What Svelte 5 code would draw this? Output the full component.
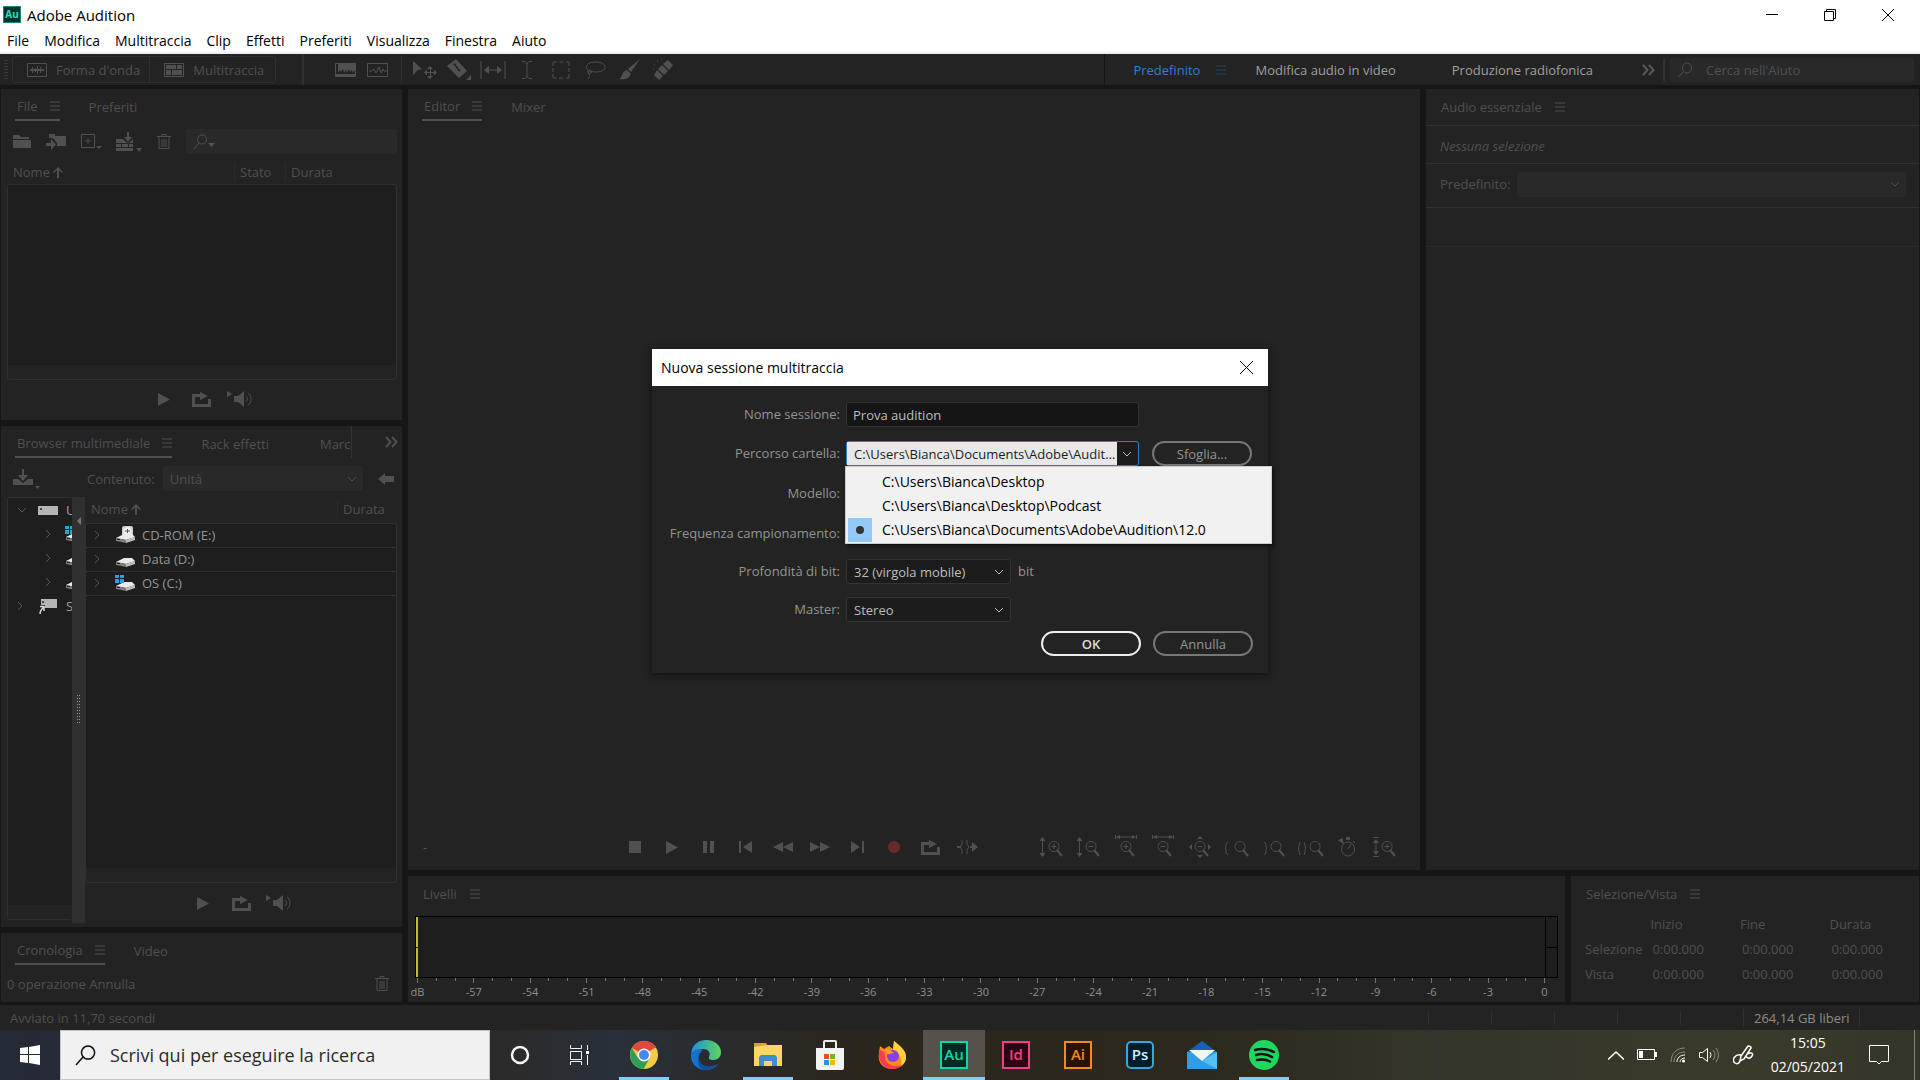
<script>
    const menus = ['File', 'Modifica', 'Multitraccia', 'Clip', 'Effetti', 'Preferiti', 'Visualizza', 'Finestra', 'Aiuto'];

    const tools = ['move', 'razor', 'slip', 'ibeam', 'marquee', 'lasso', 'brush', 'heal'];
    const transport = ['stop', 'play', 'pause', 'toStart', 'rewind', 'forward', 'toEnd', 'record', 'loop', 'skip'];
    const zooms = ['zoomInV', 'zoomOutV', 'zoomInH', 'zoomOutH', 'zoomFull', 'zoomIn', 'zoomOut', 'zoomSel', 'timer', 'zoomTrack'];
    const preview = ['play', 'loop', 'autoplay'];

    const drives = [
        { name: 'CD-ROM (E:)', kind: 'cd' },
        { name: 'Data (D:)', kind: 'disk' },
        { name: 'OS (C:)', kind: 'os' },
    ];

    const folders = [
        'C:\\Users\\Bianca\\Desktop',
        'C:\\Users\\Bianca\\Desktop\\Podcast',
        'C:\\Users\\Bianca\\Documents\\Adobe\\Audition\\12.0',
    ];

    let sessionName = $state('Prova audition');
    let folder = $state(folders[2]);
    let pickerOpen = $state(true);

    // one tick per dB, a label every third
    const ticks = Array.from({ length: 61 }, (_, i) => i - 60);

    const ranges = ['Selezione', 'Vista'];

    const apps = [
        { id: 'chrome', running: true },
        { id: 'edge' },
        { id: 'explorer', running: true },
        { id: 'store' },
        { id: 'firefox' },
        { id: 'Au', tile: true, running: true, active: true },
        { id: 'Id', tile: true },
        { id: 'Ai', tile: true },
        { id: 'Ps', tile: true },
        { id: 'mail' },
        { id: 'spotify', running: true },
    ];

    const lens = 'M10 4.5a5 5 0 1 0 .1 0z';
    const lensIn = lens + 'M7.5 9.5h5M10 7v5';
    const lensOut = lens + 'M7.5 9.5h5';

    // width, height, fill path, line path, then magnifier path and its x shift
    const icons = {
        menu: [10, 10, '', 'M0 1h10M0 5h10M0 9h10'],
        chevron: [10, 6, '', 'M1 1l4 4 4-4'],
        chevronRight: [6, 10, '', 'M1 1l4 4-4 4'],
        more: [14, 12, '', 'M2 1l4.5 5L2 11M8 1l4.500 5L8 11'],
        up: [10, 11, 'M5 0l5 5-1 1-3-3v8H4V3L1 6 0 5z', ''],
        back: [16, 12, 'M0 6l7-6v3h9v6H7v3z', ''],
        search: [16, 16, '', 'M6 10l-5 5M10 1a4.500 5 0 1 0 .1 0z'],
        searchDrop: [22, 16, 'M15 9h7l-3.500 4z', 'M6 9l-5 6M9 1a4.500 4.500 0 1 0 .1 0z'],
        wave: [20, 14, 'M3 6h14v2H3zM5 4h1v6H5zM8 5h1v4H8zM10 3h1v8h-1zM13 4h1v6h-1z', 'M.5.5h19v13H.5z'],
        multi: [20, 14, 'M2 2h10v4H2zM13 2h5v4h-5zM2 7h5v5H2zM8 7h10v5H8z', 'M.5.5h19v13H.5z'],
        spectral: [21, 14, 'M1 1h19v6l-2 3-1-3-2 2-1-3-2 4-1-3-2 3-1-4-2 3-1-2-2 3V1zM1 13v-2h19v2z', 'M.5.5h20v13H.5z'],
        pitch: [21, 14, '', 'M.5.5h20v13H.5zM2 8h3l2-2 2 4 3-6 2 6 2-4 1 2h3'],
        move: [24, 18, 'M0 0l9 8-4 1-5 5zM17 5l3 3h-6zM17 18l3-3h-6zM11 11.500l3-3v6zM24 11.500l-3-3v6z', 'M17.500 7v9M13 11.500h9'],
        razor: [24, 21, 'M0 7l9-7 11 12-8 7zM24 16v5h-5z', ''],
        slip: [26, 18, 'M4 9l5-4v8zM22 9l-5-4v8z', 'M1 0v18M25 0v18M6 9h14'],
        ibeam: [10, 18, '', 'M0 .5h3l2 2 2-2h3M5 2v14M0 17.500h3l2-2 2 2h3'],
        marquee: [18, 18, '', 'M1 5V1h4M7.500 1h4M14 1h3v4M17 7v4M17 13v4h-3M11 17H7M5 17H1v-4M1 11V7'],
        lasso: [21, 18, '', 'M11 1c12 0 12 10 0 10-13 0-13-10 0-10M4 9c-3 2 0 5 2 3s-1-4-2-2 2 5-1 8'],
        brush: [21, 21, 'M21 0L9 10l3 3zM8 11l4 4c-2 5-7 6-12 5 4-1 2-8 8-9z', ''],
        heal: [22, 21, 'M16 1l5 5-4 5-6-6zM10 6l6 6-4 4-6-6zM5 11l6 6-4 4-5-5z', 'M2 6h1M5 2h1M1 10h1M9 0h1'],
        folder: [18, 13, 'M0 0h6l2 2h8v2H0zM0 5h18v8H0z', ''],
        importFile: [20, 15, 'M3 0h6v2h11v10h-9V9L7 4H3zM0 9h5V5l5 5.500L5 16v-4H0z', ''],
        newFile: [20, 15, 'M15 12h6l-3 3z', 'M.5.5h13v13H.5zM7 4v6M4 7h6'],
        insert: [26, 20, 'M11 0h2v5h3l-4 5-4-5h3zM0 7h7l5 5 5-5v4H0zM0 12h5v3H0zM6 12h6v3H6zM13 12h4v3h-4zM0 16h17v3H0zM20 16h6l-3 4z', ''],
        trash: [14, 15, '', 'M0 2.500h14M5 2V.5h4V2M2 3v11.500h10V3M5 5v8M7 5v8M9 5v8'],
        insertDrive: [28, 20, 'M9 0h2v6h4l-5 6-5-6h4zM0 10h5l5 4 5-4h5v6H0zM22 17h5l-2.500 3z', ''],
        play: [12, 13, 'M0 0l12 6.500L0 13z', ''],
        stop: [12, 12, 'M0 0h12v12H0z', ''],
        pause: [11, 12, 'M0 0h4v12H0zM7 0h4v12H7z', ''],
        toStart: [14, 12, 'M0 0h2v12H0zM13 0v12L4 6z', ''],
        rewind: [20, 10, 'M10 0v10L0 5zM20 0v10L10 5z', ''],
        forward: [20, 10, 'M0 0v10l10-5zM10 0v10l10-5z', ''],
        toEnd: [14, 12, 'M12 0h2v12h-2zM1 0v12l9-6z', ''],
        record: [12, 12, 'M6 0a6 6 0 1 0 .1 0z', ''],
        loop: [19, 15, 'M0 2h8V0l8 4-8 4V5H3v7h13V7h3v8H0z', ''],
        skip: [21, 14, 'M15 2l6 5-6 5V8h-2V6h2zM0 6h4v2H0z', 'M5 0v4L3 7l2 3v4M10 0v4l2 3-2 3v4'],
        autoplay: [26, 16, 'M0 0l5 3-5 3zM7 5h4l6-5v16l-6-5H7z', 'M19 5c2 2 2 4 0 6M21 2c4 3 4 9 0 12'],
        zoomInV: [22, 20, 'M1.500 0l3 4h-6zM1.500 20l3-4h-6z', 'M1.500 2v16', lensIn, 3],
        zoomOutV: [22, 20, 'M1.500 0l3 4h-6zM1.500 20l3-4h-6z', 'M1.500 2v16', lensOut, 3],
        zoomInH: [22, 20, 'M1 0l4-2v4zM21 0l-4-2v4z', 'M2 0h18M.5-2v4M21.500-2v4', lensIn, 1],
        zoomOutH: [22, 20, 'M1 0l4-2v4zM21 0l-4-2v4z', 'M2 0h18M.5-2v4M21.500-2v4', lensOut, 1],
        zoomFull: [22, 20, 'M11-1l3 3H8zM11 21l3-3H8zM0 10l3-3v6zM22 10l-3-3v6z', '', lensOut, 1],
        zoomIn: [26, 20, '', 'M4 5L2 7v3l-1 1 1 1v4l2 2', lens, 6],
        zoomOut: [24, 20, '', 'M2 5l2 2v3l1 1-1 1v4l-2 2', lens, 4],
        zoomSel: [28, 20, '', 'M3 5L2 8v2l-1 1 1 1v3l1 3M7 5l1 3v2l1 1-1 1v3l-1 3', lens, 8],
        timer: [20, 20, 'M0 3l5-2v6zM8 0h4v3H8z', 'M10 5a6.500 7 0 1 0 .1 0zM10 12l3-5M15 4l2 2M3 4l3 2'],
        zoomTrack: [22, 20, 'M2 2l3 4h-6zM2 18l3-4h-6z', 'M-1 .5h6M2 4v12M-1 19.500h6', lensIn, 3],
    };
</script>

{#snippet icon(name)}
    {@const [w, h, fill, line, glass, dx] = icons[name]}
    <svg class="icon {name}" width={w} height={h} viewBox="0 0 {w} {h}" aria-hidden="true">
        {#if fill}<path d={fill} fill="currentColor" />{/if}
        {#if line}<path d={line} fill="none" stroke="currentColor" />{/if}
        {#if glass}
            <g fill="none" stroke="currentColor" transform="translate({dx} 0)">
                <path d={glass} />
                <path d="M13 13l5 6" stroke-width="2" />
            </g>
        {/if}
        {#if name === 'razor'}<path d="M7 5l2 2M11 10l2 2M9 8l2 1" stroke="#232323" stroke-width="2" />{/if}
    </svg>
{/snippet}

{#snippet tab(label, active)}
    <button class="tab" class:active>{label}{#if active}{@render icon('menu')}{/if}</button>
{/snippet}

{#snippet drive(kind)}
    <svg class="drive" width="20" height="18" viewBox="0 0 20 18" aria-hidden="true">
        {#if kind === 'cd'}
            <rect x="7" y="0" width="11" height="11" rx="2" fill="#cfcfcf" />
            <circle cx="12.500" cy="5" r="4" fill="#efefef" />
            <path d="M10 5h5M12.500 3v4" stroke="#555" />
        {/if}
        <path d="M1 12l8-4h8l3 3-9 3z" fill="#eaeaea" />
        <path d="M1 12l10 2v3L1 15z" fill="#7d7d7d" />
        <path d="M11 14l9-3v3l-9 3z" fill="#bdbdbd" />
        <path d="M2 13.500h3" stroke="#222" />
        {#if kind === 'os'}
            <path d="M0 1h4v3H0zM5 1h4v3H5zM0 5h4v4H0zM5 5h4v4H5z" fill="#22a5d0" />
        {/if}
    </svg>
{/snippet}

{#snippet logo(id)}
    <svg width="30" height="30" viewBox="0 0 30 30" aria-hidden="true">
        {#if id === 'chrome'}
            <circle cx="15" cy="15" r="14" fill="#f7c948" />
            <path d="M15 15L3 8a14 14 0 0 1 24-1z" fill="#dc4b3e" />
            <path d="M15 8h12.500L26 6 15 1z" fill="#dc4b3e" />
            <path d="M2.900 8a14 14 0 0 0 11.600 21l6-10.500L9 18z" fill="#2f9e57" />
            <circle cx="15" cy="15" r="6.500" fill="#fff" />
            <circle cx="15" cy="15" r="5" fill="#4a86f0" />
        {:else if id === 'edge'}
            <defs>
                <linearGradient id="edgeTop" x1="0" x2="1">
                    <stop offset="0" stop-color="#1d8fe0" />
                    <stop offset="1" stop-color="#5fd65a" />
                </linearGradient>
            </defs>
            <path d="M0 14C1 5 7 0 15 0c9 0 15 6 15 12 0 5-3 8-8 8-3 0-5-1-4-3 2-5-1-8-6-8C6 9 1 12 0 14z" fill="url(#edgeTop)" />
            <path d="M0 14c2-4 7-6 12-4-4 2-6 7-3 12 3 6 11 6 18 2-3 4-7 6-12 6C6 30-1 23 0 14z" fill="#1673cc" />
            <path d="M12 10c-4 2-6 8-2 13s11 5 17 1c-2 2-6 6-12 6-7 0-12-9-3-20z" fill="#0f4f9e" />
        {:else if id === 'explorer'}
            <path d="M1 3h12l2 3v4H1z" fill="#d9a520" />
            <path d="M1 7l14-2h14v21H1z" fill="#fcd56a" />
            <path d="M6 26V17l2-2h14l2 2v9h-5v-5h-8v5z" fill="#3f8fd0" />
        {:else if id === 'store'}
            <path d="M9 9V2q0-1 1-1h10q1 0 1 1v7" fill="none" stroke="#ededed" stroke-width="2" />
            <path d="M1 8h28v20q0 2-2 2H3q-2 0-2-2z" fill="#f3f3f3" />
            <path d="M9 14h5v5H9z" fill="#e8502a" />
            <path d="M15 14h5v5h-5z" fill="#7ab51d" />
            <path d="M9 20h5v5H9z" fill="#1a9be0" />
            <path d="M15 20h5v5h-5z" fill="#f8b610" />
        {:else if id === 'firefox'}
            <path d="M2 12l1-6 4 3 5-3 4 3 1-8c5 4 12 9 12 16 0 7-6 12-14 12S0 24 2 12z" fill="#ff8a1f" />
            <path d="M17 1c6 5 12 9 12 16 0 4-2 7-5 9 1-6 0-12-8-16z" fill="#ffd23b" />
            <path d="M2 12c-1 11 6 17 13 17 5 0 8-2 10-4-9 3-17-1-17-8 0-4 0-5-5-7z" fill="#fb3b52" />
            <circle cx="16" cy="16" r="6" fill="#8a3fe0" />
            <path d="M8 10c3-1 6 0 9 3-3 0-5 2-7 1z" fill="#ff9a2b" />
        {:else if id === 'mail'}
            <path d="M0 12L15 1l15 11v4H0z" fill="#1660b8" />
            <path d="M0 12h30v17H0z" fill="#2e9fe6" />
            <path d="M15 21L30 12v17z" fill="#54c0f5" />
            <path d="M2 10h26L15 21z" fill="#f4f4f4" />
        {:else if id === 'spotify'}
            <circle cx="15" cy="15" r="15" fill="#1ed760" />
            <path d="M6 10c7-2 13-1 19 2M7 15c6-2 11-1 16 2M8 20c5-1 9-1 13 1.500" fill="none" stroke="#111" stroke-width="2.500" stroke-linecap="round" />
        {/if}
    </svg>
{/snippet}

{#snippet field(id, wide)}
    <span class="select" class:wide>
        <select {id}>
            {#if id === 'depth'}<option>32 (virgola mobile)</option>{/if}
            {#if id === 'master'}<option>Stereo</option>{/if}
        </select>
        {@render icon('chevron')}
    </span>
{/snippet}

<div class="screen">
    <header class="titlebar">
        <span class="badge">Au</span>
        <span class="title">Adobe Audition</span>
        <div class="winButtons">
            <button aria-label="Riduci a icona"><svg width="12" height="12"><path d="M0 5.500h12" stroke="#000" /></svg></button>
            <button aria-label="Ripristina"><svg width="12" height="12"><path d="M.5 2.500h9v9h-9zM2.500 2V.5h9v9H10" fill="none" stroke="#000" /></svg></button>
            <button aria-label="Chiudi"><svg width="12" height="12"><path d="M0 0l12 12M12 0L0 12" stroke="#000" /></svg></button>
        </div>
    </header>
    <nav class="menubar">
        {#each menus as item}<button>{item}</button>{/each}
    </nav>

    <div class="toolbar">
        <span class="grip"></span>
        <div class="views">
            <button>{@render icon('wave')}Forma d'onda</button>
            <button>{@render icon('multi')}Multitraccia</button>
        </div>
        <span class="rule thick"></span>
        <div class="displays">
            <button aria-label="Spettro">{@render icon('spectral')}</button>
            <button aria-label="Tonalità">{@render icon('pitch')}</button>
        </div>
        <span class="rule"></span>
        <div class="tools">
            {#each tools as t}<button aria-label={t}>{@render icon(t)}</button>{/each}
        </div>
        <div class="workspaces">
            <button class="current">Predefinito {@render icon('menu')}</button>
            <button>Modifica audio in video</button>
            <button>Produzione radiofonica</button>
            <button class="overflow" aria-label="Altro">{@render icon('more')}</button>
        </div>
        <label class="help">
            {@render icon('search')}
            <input type="search" placeholder="Cerca nell'Aiuto" aria-label="Cerca nell'Aiuto" />
        </label>
    </div>

    <main>
        <aside class="left">
            <section class="panel files">
                <div class="tabs">{@render tab('File', true)}{@render tab('Preferiti')}</div>
                <div class="fileTools">
                    <button aria-label="Apri">{@render icon('folder')}</button>
                    <button aria-label="Importa">{@render icon('importFile')}</button>
                    <button aria-label="Nuovo">{@render icon('newFile')}</button>
                    <button aria-label="Inserisci">{@render icon('insert')}</button>
                    <button aria-label="Elimina">{@render icon('trash')}</button>
                    <label class="filter">{@render icon('searchDrop')}<input aria-label="Filtro" /></label>
                </div>
                <div class="columns">
                    <span class="name">Nome {@render icon('up')}</span>
                    <span class="state">Stato</span>
                    <span class="length">Durata</span>
                </div>
                <div class="list"></div>
                <div class="preview">
                    {#each preview as p}<button aria-label={p}>{@render icon(p)}</button>{/each}
                </div>
            </section>

            <section class="panel browser">
                <div class="tabs">
                    {@render tab('Browser multimediale', true)}
                    {@render tab('Rack effetti')}
                    <span class="cut">{@render tab('Marca')}</span>
                    <button class="overflow" aria-label="Altro">{@render icon('more')}</button>
                </div>
                <div class="source">
                    <button aria-label="Importa">{@render icon('insertDrive')}</button>
                    <label for="content">Contenuto:</label>
                    <span class="select dim">
                        <select id="content"><option>Unità</option></select>
                        {@render icon('chevron')}
                    </span>
                    <button aria-label="Indietro">{@render icon('back')}</button>
                </div>
                <div class="split">
                    <div class="tree">
                        <div class="node">
                            {@render icon('chevron')}
                            <svg class="box" width="20" height="9"><path d="M0 0h20v9H0z" fill="#b5b5b5" /><circle cx="3" cy="3" r="1" fill="#222" /></svg>
                            U
                        </div>
                        {#each ['os', 'disk', 'disk'] as kind}
                            <div class="node child">{@render icon('chevronRight')}{@render drive(kind)}</div>
                        {/each}
                        <div class="node closed">
                            {@render icon('chevronRight')}
                            <svg class="box" width="20" height="15"><path d="M3 0h16v9H7V6H3z" fill="#b5b5b5" /><circle cx="5" cy="3" r="1" fill="#222" /><path d="M2 15q0-4 4-7M2 7.500h4V12" fill="none" stroke="#ddd" stroke-width="1.500" /></svg>
                            S
                        </div>
                    </div>
                    <div class="splitter"><span class="fold"></span><span class="dots"></span></div>
                    <div class="contents">
                        <div class="columns">
                            <span class="name">Nome {@render icon('up')}</span>
                            <span class="length">Durata</span>
                        </div>
                        <div class="list">
                            {#each drives as d}
                                <div class="row">{@render icon('chevronRight')}{@render drive(d.kind)}{d.name}</div>
                            {/each}
                        </div>
                        <div class="preview">
                            {#each preview as p}<button aria-label={p}>{@render icon(p)}</button>{/each}
                        </div>
                    </div>
                </div>
            </section>

            <section class="panel history">
                <div class="tabs">{@render tab('Cronologia', true)}{@render tab('Video')}</div>
                <div class="undo">
                    <span>0 operazione Annulla</span>
                    <button aria-label="Svuota">{@render icon('trash')}</button>
                </div>
            </section>
        </aside>

        <div class="right">
            <div class="upper">
                <section class="panel editor">
                    <div class="tabs">{@render tab('Editor', true)}{@render tab('Mixer')}</div>
                    <div class="controls">
                        <span>-</span>
                        <div class="group">{#each transport as t}<button aria-label={t}>{@render icon(t)}</button>{/each}</div>
                        <div class="group">{#each zooms as z}<button aria-label={z}>{@render icon(z)}</button>{/each}</div>
                    </div>
                </section>
                <section class="panel essential">
                    <h2>Audio essenziale {@render icon('menu')}</h2>
                    <p>Nessuna selezione</p>
                    <div class="preset">
                        <label for="preset">Predefinito:</label>
                        <span class="select dim"><select id="preset"></select>{@render icon('chevron')}</span>
                    </div>
                    <div class="blank"></div>
                </section>
            </div>
            <div class="lower">
                <section class="panel levels">
                    <h2>Livelli {@render icon('menu')}</h2>
                    <div class="meter">
                        <div class="bars"><span></span><span></span></div>
                        <div class="clip"><span></span><span></span></div>
                    </div>
                    <div class="scale">
                        {#each ticks as db}
                            <div class="tick" class:major={db % 3 === 0}>
                                {#if db % 3 === 0}<span>{db === -60 ? 'dB' : db}</span>{/if}
                            </div>
                        {/each}
                    </div>
                </section>
                <section class="panel selection">
                    <h2>Selezione/Vista {@render icon('menu')}</h2>
                    <table>
                        <thead>
                            <tr><th></th><th>Inizio</th><th>Fine</th><th>Durata</th></tr>
                        </thead>
                        <tbody>
                            {#each ranges as r}
                                <tr><th>{r}</th><td>0:00.000</td><td>0:00.000</td><td>0:00.000</td></tr>
                            {/each}
                        </tbody>
                    </table>
                </section>
            </div>
        </div>
    </main>

    <footer class="status">
        <span class="msg">Avviato in 11,70 secondi</span>
        <i></i><i></i><i></i><i></i><i></i>
        <span class="free">264,14 GB liberi</span>
    </footer>

    <div class="taskbar">
        <button class="start" aria-label="Start">
            <svg width="20" height="20"><path d="M0 3l8-1v7H0zM9 2l11-2v9H9zM0 10h8v8l-8-1zM9 10h11v10L9 18z" fill="#fff" /></svg>
        </button>
        <label class="find">
            <svg width="21" height="21"><path d="M8 12L1 20M13 1a6.500 6.500 0 1 0 .1 0z" fill="none" stroke="#111" stroke-width="1.500" /></svg>
            <input type="search" placeholder="Scrivi qui per eseguire la ricerca" aria-label="Scrivi qui per eseguire la ricerca" />
        </label>
        <button class="sys" aria-label="Cortana">
            <svg width="20" height="20"><circle cx="10" cy="10" r="8" fill="none" stroke="#f4f4f4" stroke-width="2.500" /></svg>
        </button>
        <button class="sys" aria-label="Visualizzazione attività">
            <svg width="22" height="20"><path d="M1.500 0v3.500h11V0M1.500 6.500h11v8h-11zM1.500 20v-3.500h11V20M18.500 0v5M18.500 10v10" fill="none" stroke="#f4f4f4" /><path d="M17 6h3v3h-3z" fill="#fff" /></svg>
        </button>
        <div class="apps">
            {#each apps as app}
                <button class="app" class:active={app.active} class:running={app.running} aria-label={app.id}>
                    {#if app.tile}<span class="tile {app.id}">{app.id}</span>{:else}{@render logo(app.id)}{/if}
                </button>
            {/each}
        </div>
        <div class="tray">
            <svg width="16" height="9"><path d="M0 8.500L8 1l8 7.500" fill="none" stroke="#fff" stroke-width="1.500" /></svg>
            <svg width="20" height="12"><path d="M.5.5h17v10H.5z" fill="none" stroke="#fff" /><path d="M2 2h4v7H2zM18 3h2v5h-2z" fill="#fff" /></svg>
            <svg width="16" height="16"><path d="M1 15C1 6 7 1 15 1M4 15c0-6 4-10 11-10" fill="none" stroke="#8c8c84" /><path d="M7 15c0-4 3-7 8-7M10 15c0-2 2-4 5-4" fill="none" stroke="#fff" /><circle cx="13.500" cy="14" r="1.500" fill="#fff" /></svg>
            <svg width="21" height="18"><path d="M.5 6.500h3l5-4v13l-5-4h-3zM11 6q2 3 0 6" fill="none" stroke="#fff" /><path d="M14 4q4 5 0 10M17 2q5 7 0 14" fill="none" stroke="#8c8c84" /></svg>
            <svg width="21" height="20"><path d="M7 16l1-5 7-10q3 0 3 2l-7 11zM8 10c-6-1-10 5-6 8 3 2 5-1 6-4M14 9c4-2 7-1 5 2s-5 3-6 0" fill="none" stroke="#fff" stroke-width="1.500" /></svg>
            <div class="clock"><span>15:05</span><span>02/05/2021</span></div>
            <svg width="20" height="20"><path d="M.5.5h19v16h-7L10 19l-2.500-2.500h-7z" fill="none" stroke="#fff" /></svg>
            <span class="peek"></span>
        </div>
    </div>

    <form class="dialog" onsubmit={(e) => e.preventDefault()}>
        <header>
            Nuova sessione multitraccia
            <button type="button" aria-label="Chiudi"><svg width="13" height="13"><path d="M0 0l13 13M13 0L0 13" stroke="#000" /></svg></button>
        </header>
        <div class="fields">
            <label for="name">Nome sessione:</label>
            <div><input id="name" bind:value={sessionName} /></div>

            <label for="folder">Percorso cartella:</label>
            <div class="path">
                <span class="select wide focus">
                    <select id="folder" bind:value={folder}>
                        {#each folders as f}<option>{f}</option>{/each}
                    </select>
                    {@render icon('chevron')}
                </span>
                <button type="button" class="pill">Sfoglia...</button>
                {#if pickerOpen}
                    <ul class="popup">
                        {#each folders as f}
                            <li>
                                <button type="button" class:chosen={f === folder} onclick={() => { folder = f; pickerOpen = false; }}>
                                    <span class="mark"></span>{f}
                                </button>
                            </li>
                        {/each}
                    </ul>
                {/if}
            </div>

            <label for="template">Modello:</label>
            <div>{@render field('template', true)}</div>

            <label for="rate">Frequenza campionamento:</label>
            <div>{@render field('rate')}</div>

            <label for="depth">Profondità di bit:</label>
            <div>{@render field('depth')}<span class="unit">bit</span></div>

            <label for="master">Master:</label>
            <div>{@render field('master')}</div>
        </div>
        <div class="actions">
            <button class="pill primary">OK</button>
            <button type="button" class="pill">Annulla</button>
        </div>
    </form>
</div>

<style>
    :global(body) {
        margin: 0;
        background: #161616;
    }

    .screen {
        --panel: #232323;
        --gap: #161616;
        --dim: #505050;
        --line: #303030;
        --well: #1e1e1e;

        position: relative;
        display: flex;
        flex-direction: column;
        min-height: 100vh;
        background: var(--gap);
        color: var(--dim);
        font: 13px/18px "Open Sans", "Noto Sans", sans-serif;
    }

    .screen *, .screen *::before {
        box-sizing: border-box;
    }

    button, input, select {
        font: inherit;
        color: inherit;
        background: none;
        border: 0;
        padding: 0;
        margin: 0;
        outline: 0;
        min-width: 0;
    }

    button {
        display: flex;
        align-items: center;
        justify-content: center;
        white-space: nowrap;
    }

    select {
        appearance: none;
        flex: 1;
        height: 100%;
        text-overflow: ellipsis;
    }

    svg {
        flex: none;
        display: block;
    }

    .icon {
        overflow: visible;
    }

    .icon.record {
        color: #6b2a2a;
    }

    .icon.more {
        stroke-width: 2;
    }

    h2 {
        display: flex;
        align-items: center;
        gap: 13px;
        margin: 0;
        font: inherit;
    }

    /* window chrome */
    .titlebar {
        display: flex;
        align-items: center;
        height: 29px;
        padding-left: 3px;
        background: #fff;
        color: #000;
        font-size: 14px;
    }

    .title {
        font-size: 15px;
    }

    .badge {
        width: 18px;
        height: 17px;
        margin-right: 6px;
        border: 1px solid #1a8a78;
        background: #00332c;
        color: #1fe0c0;
        font: bold 10px/14px "Open Sans", sans-serif;
        text-align: center;
    }

    .winButtons {
        display: flex;
        margin: 0 3px 0 auto;
    }

    .winButtons button {
        width: 58px;
        height: 29px;
    }

    .menubar {
        display: flex;
        gap: 15px;
        height: 25px;
        padding-left: 7px;
        background: #fff;
        border-bottom: 2px solid #eeeef0;
        color: #000;
        font-size: 14px;
    }

    /* tool bar */
    .toolbar {
        display: flex;
        align-items: center;
        height: 31px;
        margin-bottom: 4px;
        background: var(--panel);
    }

    .grip {
        width: 4px;
        height: 20px;
        margin: 0 4px;
        background: repeating-linear-gradient(#3a3a3a 0 1px, transparent 1px 3px);
    }

    .views {
        display: flex;
        height: 27px;
        border: 1px solid #2f2f2f;
        border-radius: 3px;
    }

    .views button {
        gap: 9px;
        padding: 0 9px 0 14px;
    }

    .views button + button {
        border-left: 1px solid #2f2f2f;
        padding-right: 11px;
    }

    .rule {
        width: 1px;
        height: 27px;
        background: #303030;
    }

    .rule.thick {
        width: 2px;
        height: 100%;
        margin-left: 26px;
    }

    .displays {
        display: flex;
        gap: 11px;
        padding: 0 13px 0 31px;
    }

    .tools {
        display: flex;
        padding-left: 6px;
    }

    .tools button {
        width: 34px;
    }

    .workspaces {
        display: flex;
        align-items: center;
        height: 100%;
        margin-left: auto;
        padding: 0 15px 0 28px;
        border-left: 1px solid #151515;
        color: #9f9f9f;
    }

    .workspaces button {
        margin-right: 56px;
    }

    .workspaces button:nth-child(3) {
        margin-right: 48px;
    }

    .workspaces .current {
        gap: 16px;
        margin-right: 29px;
        color: #2d7fd0;
    }

    .workspaces .current .icon {
        color: #29435e;
    }

    .workspaces .overflow {
        margin: 0;
        color: #5a5a5a;
    }

    .help {
        display: flex;
        align-items: center;
        gap: 13px;
        width: 244px;
        height: 24px;
        margin-right: 6px;
        padding-left: 7px;
        border-radius: 2px;
        background: #292929;
        box-shadow: -5px 0 0 var(--panel), -7px 0 0 #333;
    }

    .help input {
        flex: 1;
    }

    input::placeholder {
        color: inherit;
        opacity: 1;
    }

    /* panels */
    main {
        display: flex;
        flex: 1;
        gap: 6px;
        padding: 0 1px;
    }

    .left {
        display: flex;
        flex-direction: column;
        gap: 6px;
        width: 401px;
    }

    .right {
        display: flex;
        flex: 1;
        flex-direction: column;
        gap: 6px;
        min-width: 0;
    }

    .upper, .lower {
        display: flex;
        gap: 6px;
    }

    .upper {
        flex: 1;
    }

    .panel {
        display: flex;
        flex-direction: column;
        background: var(--panel);
    }

    .tabs {
        display: flex;
        height: 32px;
        padding-left: 14px;
    }

    .tab {
        flex: none;
        margin-right: 24px;
        padding: 4px 0 0 2px;
    }

    .tab.active {
        gap: 12px;
        margin-right: 27px;
        border-bottom: 2px solid var(--dim);
    }

    .files {
        height: 331px;
    }

    .fileTools {
        display: flex;
        align-items: center;
        gap: 15px;
        height: 41px;
        padding: 0 5px 0 12px;
    }

    .filter {
        display: flex;
        align-items: center;
        flex: 1;
        height: 25px;
        padding-left: 7px;
        border-radius: 2px;
        background: #292929;
    }

    .columns {
        display: flex;
        align-items: center;
        height: 22px;
        padding: 0 0 2px 12px;
    }

    .columns .name {
        display: flex;
        align-items: center;
        flex: 1;
        gap: 3px;
    }

    .state, .length {
        padding-left: 5px;
        border-left: 1px solid #2b2b2b;
    }

    .state {
        width: 51px;
    }

    .files .length {
        width: 117px;
    }

    .list, .tree {
        flex: 1;
        border: 1px solid var(--line);
        border-radius: 3px;
        background: linear-gradient(to top, #232323 14px, var(--well) 14px);
    }

    .files .list {
        margin: 0 5px 0 6px;
    }

    .preview {
        display: flex;
        align-items: center;
        justify-content: center;
        height: 40px;
        padding-bottom: 2px;
    }

    .preview button {
        width: 38px;
    }

    .select {
        display: inline-flex;
        align-items: center;
        width: 165px;
        height: 25px;
        padding: 0 6px 0 7px;
        border: 1px solid #333;
        border-radius: 3px;
        background: #1c1c1c;
        color: #bdbdbd;
    }

    .select.wide {
        width: 293px;
    }

    .select.dim {
        flex: 1;
        border: 0;
        background: #292929;
        color: inherit;
    }

    .browser {
        flex: 1;
    }

    .cut {
        display: flex;
        width: 34px;
        margin-left: 25px;
        overflow: hidden;
        border-right: 1px solid #333;
    }

    .browser .overflow {
        margin-left: auto;
        padding-right: 4px;
    }

    .source {
        display: flex;
        align-items: center;
        height: 39px;
        padding: 2px 8px 0 12px;
    }

    .source label {
        margin: 0 8px 0 46px;
    }

    .source .select {
        margin-right: 15px;
    }

    .split {
        display: flex;
        flex: 1;
        padding: 0 5px 4px 6px;
    }

    .tree {
        flex: none;
        width: 65px;
        margin-bottom: 3px;
        border-right: 0;
        overflow: hidden;
        color: #a0a0a0;
    }

    .node {
        display: flex;
        align-items: center;
        gap: 11px;
        height: 24px;
        padding-left: 9px;
        white-space: nowrap;
    }

    .node .icon, .row .icon {
        color: #555;
    }

    .child {
        gap: 14px;
        padding-left: 37px;
    }

    .closed {
        gap: 15px;
    }

    .node .box {
        margin-right: -3px;
    }

    .closed .box {
        margin-right: -7px;
    }

    .splitter {
        position: relative;
        display: flex;
        align-items: center;
        justify-content: center;
        width: 13px;
        background: #303030;
    }

    .fold {
        position: absolute;
        top: 20px;
        left: 5px;
        border: solid transparent;
        border-width: 4px 4px 4px 0;
        border-right-color: #777;
    }

    .dots {
        width: 4px;
        height: 30px;
        background: repeating-linear-gradient(90deg, transparent 0 1px, #303030 1px 2px), repeating-linear-gradient(#999 0 1px, transparent 1px 3px);
    }

    .contents {
        display: flex;
        flex: 1;
        flex-direction: column;
    }

    .contents .columns {
        height: 26px;
        padding-left: 6px;
    }

    .contents .length {
        width: 60px;
    }

    .contents .preview {
        height: 40px;
        padding: 0;
    }

    .row {
        display: flex;
        align-items: center;
        height: 24px;
        padding: 0 0 1px 8px;
        border-bottom: 1px solid var(--line);
        color: #949494;
    }

    .row .drive {
        margin: 0 7px 0 15px;
    }

    .history {
        height: 69px;
    }

    .undo {
        display: flex;
        align-items: center;
        justify-content: space-between;
        flex: 1;
        padding: 0 13px 0 6px;
    }

    .editor {
        flex: 1;
        justify-content: space-between;
    }

    .controls {
        display: flex;
        align-items: center;
        gap: 47px;
        height: 46px;
        padding: 0 17px 0 15px;
    }

    .controls span {
        flex: 1;
    }

    .group {
        display: flex;
    }

    .group button {
        width: 37px;
    }

    .essential {
        width: 493px;
    }

    .essential h2 {
        height: 37px;
        padding-left: 15px;
        border-bottom: 1px solid var(--line);
    }

    .essential p {
        height: 38px;
        margin: 0;
        padding: 11px 14px 0;
        border-bottom: 1px solid var(--line);
        font-style: italic;
    }

    .preset {
        display: flex;
        align-items: center;
        gap: 7px;
        height: 44px;
        padding: 0 13px 3px 14px;
        border-bottom: 1px solid var(--line);
    }

    .blank {
        height: 39px;
        border-bottom: 1px solid #2a2a2a;
    }

    .lower {
        height: 126px;
    }

    .lower h2 {
        height: 36px;
        padding-left: 15px;
    }

    .levels {
        flex: 1;
    }

    .meter {
        display: flex;
        height: 62px;
        margin: 4px 7px 0;
        border: 1px solid #000;
        background: var(--well);
    }

    .bars, .clip {
        display: flex;
        flex-direction: column;
        gap: 1px;
    }

    .bars {
        flex: 1;
    }

    .bars span {
        flex: 1;
        width: 2px;
        background: #c4c02a;
    }

    .clip {
        width: 12px;
        border-left: 1px solid #000;
        background: #000;
    }

    .clip span {
        flex: 1;
        background: var(--well);
    }

    .scale {
        display: flex;
        justify-content: space-between;
        padding: 0 20px 0 9px;
        color: #8f8f8f;
        font-size: 11px;
    }

    .tick {
        display: flex;
        justify-content: center;
        width: 1px;
        height: 3px;
        padding-top: 5px;
        background: linear-gradient(#777, #777) top / 1px 3px no-repeat;
    }

    .tick.major {
        height: 24px;
        background-size: 1px 5px;
    }

    .selection {
        width: 348px;
    }

    table {
        margin-left: 14px;
        border-collapse: collapse;
        table-layout: fixed;
        width: 334px;
    }

    th, td {
        width: 89px;
        height: 25px;
        padding: 0 0 1px;
        font-weight: normal;
        text-align: left;
    }

    th:first-child {
        width: 65px;
    }

    td {
        padding-left: 2px;
    }

    .status {
        display: flex;
        align-items: center;
        height: 25px;
        margin-top: 3px;
        padding-left: 10px;
        background: var(--panel);
    }

    .msg {
        flex: 1;
    }

    .status i {
        width: 63px;
        height: 14px;
        border-left: 1px solid var(--line);
    }

    .free {
        width: 117px;
        height: 18px;
        margin-right: 60px;
        padding-left: 10px;
        border: solid var(--line);
        border-width: 0 1px;
        color: #8c8c8c;
    }

    /* Windows task bar */
    .taskbar {
        display: flex;
        height: 50px;
        background: linear-gradient(90deg, #242a36, #2b2b2c 27%, #28303a 32%, #2b261d 44%, #2c281e 62%, #34352a 75%, #3a3a2b 92%, #34352a);
        color: #fff;
        font-size: 14px;
    }

    .start {
        width: 60px;
    }

    .find {
        display: flex;
        align-items: center;
        gap: 14px;
        width: 430px;
        padding-left: 14px;
        border: 1px solid #c4c4c4;
        background: #f1f1f1;
        color: #2b2b2b;
        font-size: 18px;
    }

    .find input {
        flex: 1;
    }

    .sys {
        width: 60px;
    }

    .apps {
        display: flex;
        padding-left: 3px;
    }

    .app {
        width: 62px;
        position: relative;
    }

    .app.active {
        background: #55524c;
    }

    .app.running::before {
        content: "";
        position: absolute;
        inset: auto 6px 0;
        height: 3px;
        background: #76d3f7;
    }

    .app.active::before {
        inset: auto 0 0;
    }

    .tile {
        width: 28px;
        height: 28px;
        border: 2px solid;
        font: 600 15px/23px "Open Sans", sans-serif;
    }

    .Au {
        background: #00281f;
        color: #00d9b0;
    }

    .Id {
        background: #2d0313;
        color: #f03f86;
    }

    .Ai {
        background: #291403;
        color: #f28a1c;
    }

    .Ps {
        border-color: #31a8e0;
        border-radius: 5px;
        background: #041d2d;
        color: #cfeeff;
    }

    .tray {
        display: flex;
        align-items: center;
        gap: 13px;
        margin-left: auto;
    }

    .clock {
        display: flex;
        flex-direction: column;
        align-items: center;
        gap: 6px;
        padding: 0 11px 0 4px;
    }

    .peek {
        width: 6px;
        height: 100%;
        margin-left: 12px;
        border-left: 1px solid #85857c;
    }

    /* new session dialog */
    .dialog {
        position: absolute;
        top: 349px;
        left: 50%;
        width: 616px;
        padding-bottom: 17px;
        transform: translateX(-50%);
        background: var(--panel);
        box-shadow: 0 2px 8px #111;
        color: #949494;
    }

    .dialog header {
        display: flex;
        align-items: center;
        justify-content: space-between;
        height: 37px;
        padding: 0 15px 0 9px;
        background: #fff;
        color: #000;
        font-size: 14px;
    }

    .fields {
        display: grid;
        grid-template: 25px 26px 26px 24px 24px 26px / 188px 1fr;
        gap: 14px 6px;
        padding-top: 16px;
    }

    .fields > label {
        line-height: 25px;
        text-align: right;
    }

    .fields > div {
        display: flex;
    }

    #name {
        width: 293px;
        height: 25px;
        padding: 0 6px;
        border: 1px solid #333;
        border-radius: 3px;
        background: #151515;
        color: #bdbdbd;
    }

    .path {
        position: relative;
        gap: 13px;
    }

    .focus {
        gap: 5px;
        padding-left: 0;
        border-color: #2d7fd0;
    }

    .focus select {
        padding-left: 7px;
        background: #e8e8e8;
        color: #1c1c1c;
    }

    .pill {
        width: 100px;
        height: 25px;
        border: 2px solid #777;
        border-radius: 13px;
    }

    .pill.primary {
        border-color: #eee;
        color: #ddd;
        font-weight: 600;
    }

    .unit {
        margin-left: 7px;
        line-height: 25px;
    }

    .popup {
        position: absolute;
        z-index: 1;
        top: 25px;
        left: -1px;
        width: 427px;
        margin: 0;
        padding: 3px 2px 1px;
        border: 1px solid #ccc;
        background: #f1f1f1;
        box-shadow: 2px 2px 3px #111;
        color: #000;
        font-size: 14px;
        list-style: none;
    }

    .popup button {
        gap: 10px;
        height: 24px;
    }

    .mark {
        display: grid;
        place-items: center;
        width: 24px;
        height: 24px;
    }

    .chosen .mark {
        background: #91c9f7;
    }

    .chosen .mark::before {
        content: "";
        width: 8px;
        height: 8px;
        border-radius: 50%;
        background: #333;
    }

    .actions {
        display: flex;
        justify-content: flex-end;
        gap: 12px;
        padding: 8px 15px 0;
    }
</style>
